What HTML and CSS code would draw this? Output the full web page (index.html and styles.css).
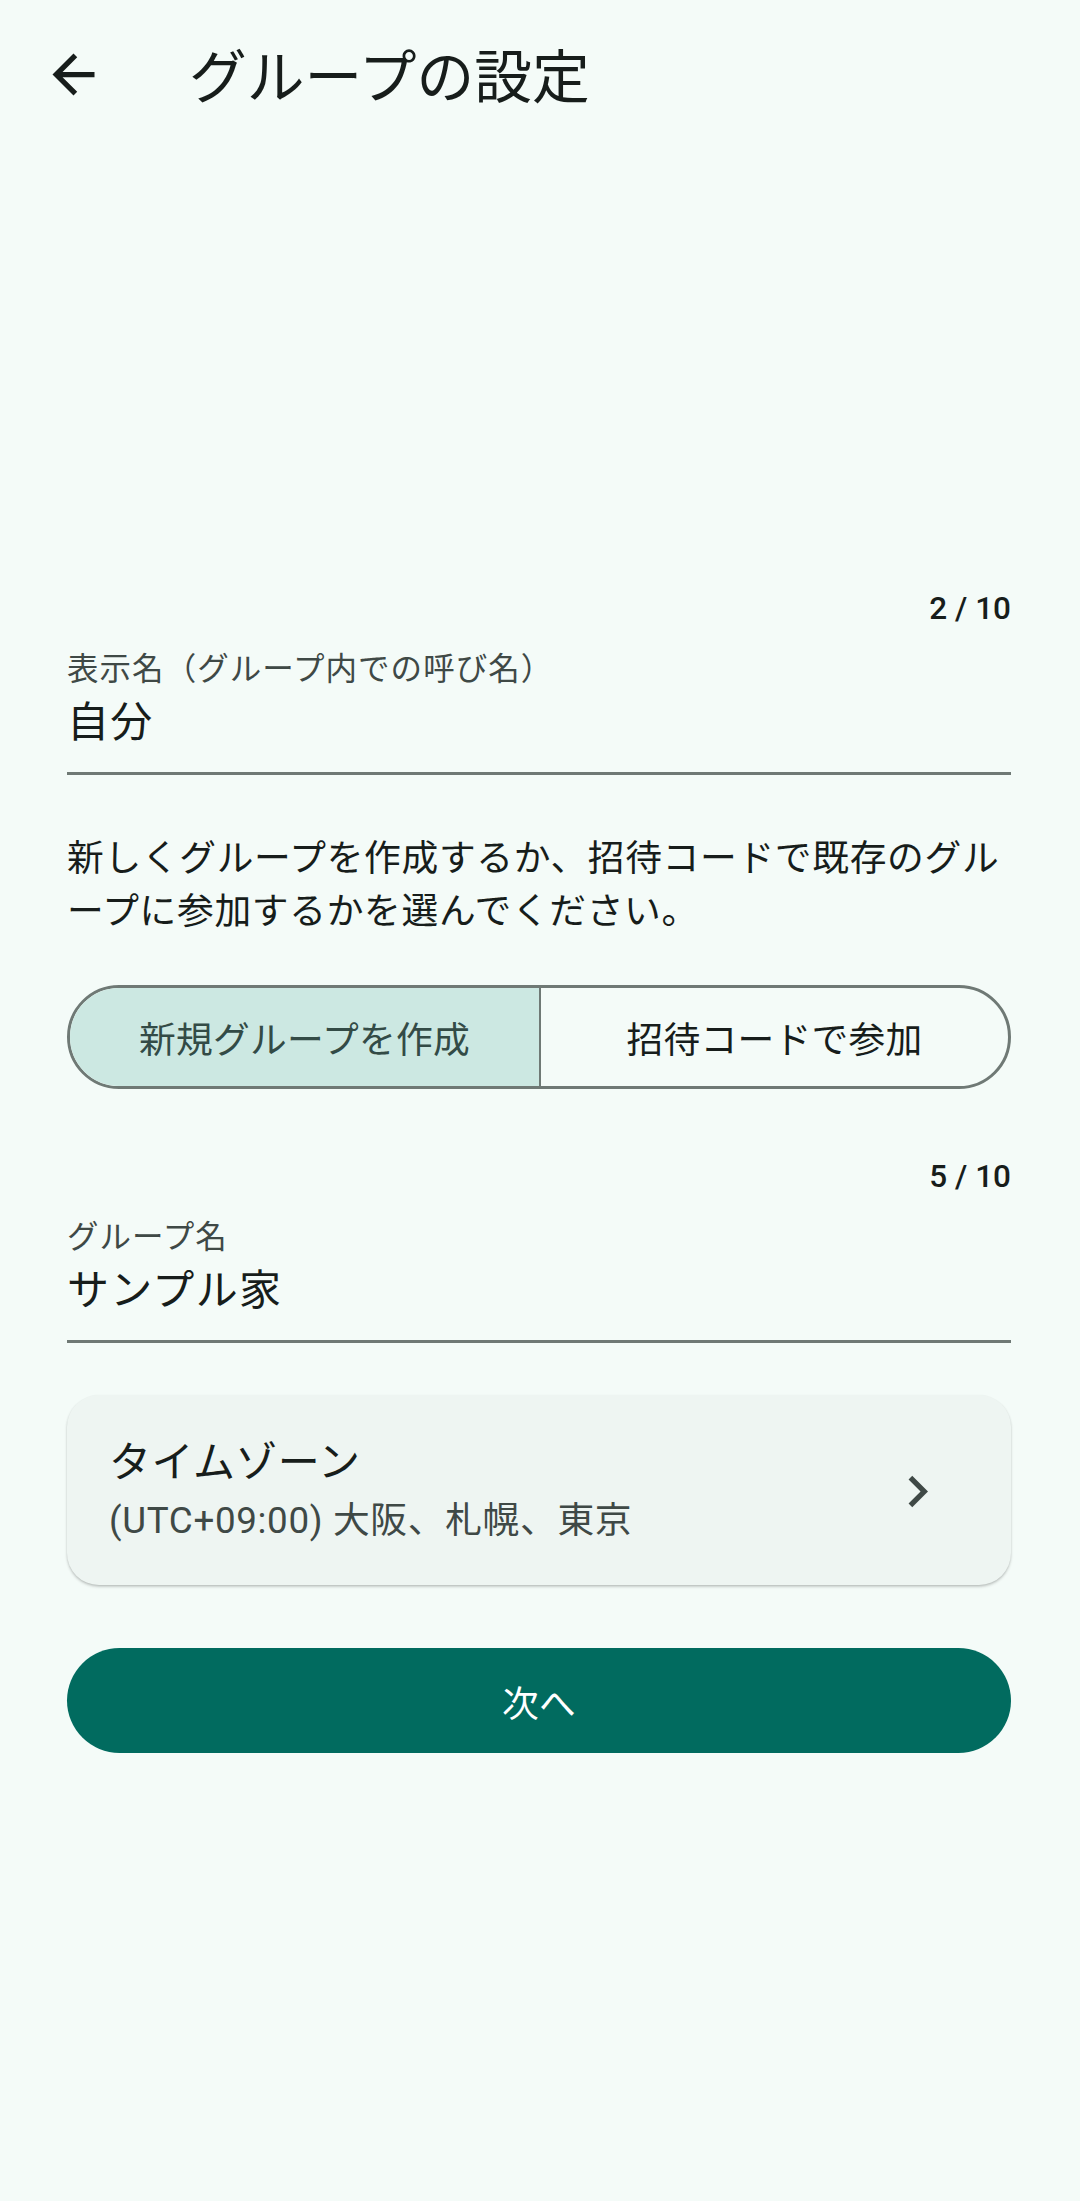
FILE: index.html
```html
<!DOCTYPE html>
<html lang="ja">
<head>
<meta charset="utf-8">
<title>グループの設定</title>
<link rel="stylesheet" href="styles.css">
</head>
<body>
<div class="app">
  <header class="topbar">
    <svg class="back" viewBox="0 0 24 24" aria-label="戻る"><path d="M20 11H7.83l5.59-5.59L12 4l-8 8 8 8 1.41-1.41L7.83 13H20v-2z"/></svg>
    <h1 class="title">グループの設定</h1>
  </header>
  <main class="content">
    <div class="field field-first">
      <div class="counter">2 / 10</div>
      <div class="label">表示名（グループ内での呼び名）</div>
      <div class="value">自分</div>
    </div>
    <p class="desc">新しくグループを作成するか、招待コードで既存のグル<br>ープに参加するかを選んでください。</p>
    <div class="segmented">
      <div class="seg seg-selected">新規グループを作成</div>
      <div class="seg seg-right">招待コードで参加</div>
    </div>
    <div class="field field-second">
      <div class="counter">5 / 10</div>
      <div class="label">グループ名</div>
      <div class="value">サンプル家</div>
    </div>
    <div class="card">
      <div class="card-text">
        <div class="card-title">タイムゾーン</div>
        <div class="card-sub">(UTC+09:00) 大阪、札幌、東京</div>
      </div>
      <svg class="chevron" viewBox="0 0 24 24"><path d="M10 6L8.59 7.41 13.17 12l-4.58 4.59L10 18l6-6z"/></svg>
    </div>
    <div class="primary">次へ</div>
  </main>
</div>
</body>
</html>
```
FILE: styles.css
```css
html, body {
  margin: 0;
  padding: 0;
}
body {
  background: #f4fbf8;
  font-family: Roboto, "Noto Sans CJK JP", sans-serif;
  color: #171d1b;
}
.app {
  width: 1080px;
  min-height: 2201px;
}
.topbar {
  height: 148px;
  display: flex;
  align-items: center;
}
.back {
  width: 63px;
  height: 63px;
  margin-left: 42px;
  fill: #171d1b;
  flex: none;
}
.title {
  margin: 0 0 0 84px;
  font-size: 57.75px;
  font-weight: 400;
  line-height: 76px;
  padding-top: 8px;
}
.content {
  padding: 0 69px 0 67px;
  display: flex;
  flex-direction: column;
}
.field {
  display: flex;
  flex-direction: column;
}
.field-first {
  margin-top: 440px;
}
.field-second {
  margin-top: 67px;
}
.counter {
  align-self: flex-end;
  font-size: 31.5px;
  font-weight: 500;
  line-height: 42px;
  letter-spacing: 0;
  color: #171d1b;
}
.label {
  margin-top: 19px;
  font-size: 31.5px;
  line-height: 42px;
  letter-spacing: 1.05px;
  color: #3f4946;
}
.value {
  margin-top: 4px;
  font-size: 42px;
  line-height: 56px;
  letter-spacing: 1.3px;
  padding-bottom: 21px;
  border-bottom: 3px solid #6f7975;
}
.desc {
  margin: 58px 0 0;
  font-size: 36.75px;
  line-height: 52.5px;
  letter-spacing: 0.66px;
}
.segmented {
  margin-top: 47px;
  height: 104px;
  box-sizing: border-box;
  border: 3px solid #6f7975;
  border-radius: 52px;
  overflow: hidden;
  display: grid;
  grid-template-columns: 1fr 1fr;
}
.seg {
  display: flex;
  align-items: center;
  justify-content: center;
  font-size: 36.75px;
  letter-spacing: 0.26px;
}
.seg-selected {
  background: #cce8e2;
  color: #334b46;
}
.seg-right {
  border-left: 2px solid #6f7975;
  color: #171d1b;
}
.card {
  margin-top: 52px;
  height: 190px;
  box-sizing: border-box;
  padding: 40px 62px 38px 42px;
  background: #eef5f2;
  border-radius: 32px;
  box-shadow: 0 2px 3px rgba(0, 0, 0, 0.16), 0 1px 2px rgba(0, 0, 0, 0.1);
  display: flex;
  align-items: center;
}
.card-text {
  flex: 1;
  display: flex;
  flex-direction: column;
  gap: 4px;
}
.card-title {
  font-size: 42px;
  line-height: 56px;
  letter-spacing: 0.4px;
  color: #171d1b;
}
.card-sub {
  font-size: 36.75px;
  line-height: 52.5px;
  letter-spacing: 0.66px;
  color: #3f4946;
}
.chevron {
  width: 63px;
  height: 63px;
  fill: #3f4946;
  flex: none;
}
.primary {
  margin-top: 63px;
  height: 105px;
  border-radius: 53px;
  background: #016b5f;
  color: #ffffff;
  display: flex;
  align-items: center;
  justify-content: center;
  font-size: 36.75px;
  letter-spacing: 0.26px;
}
```
